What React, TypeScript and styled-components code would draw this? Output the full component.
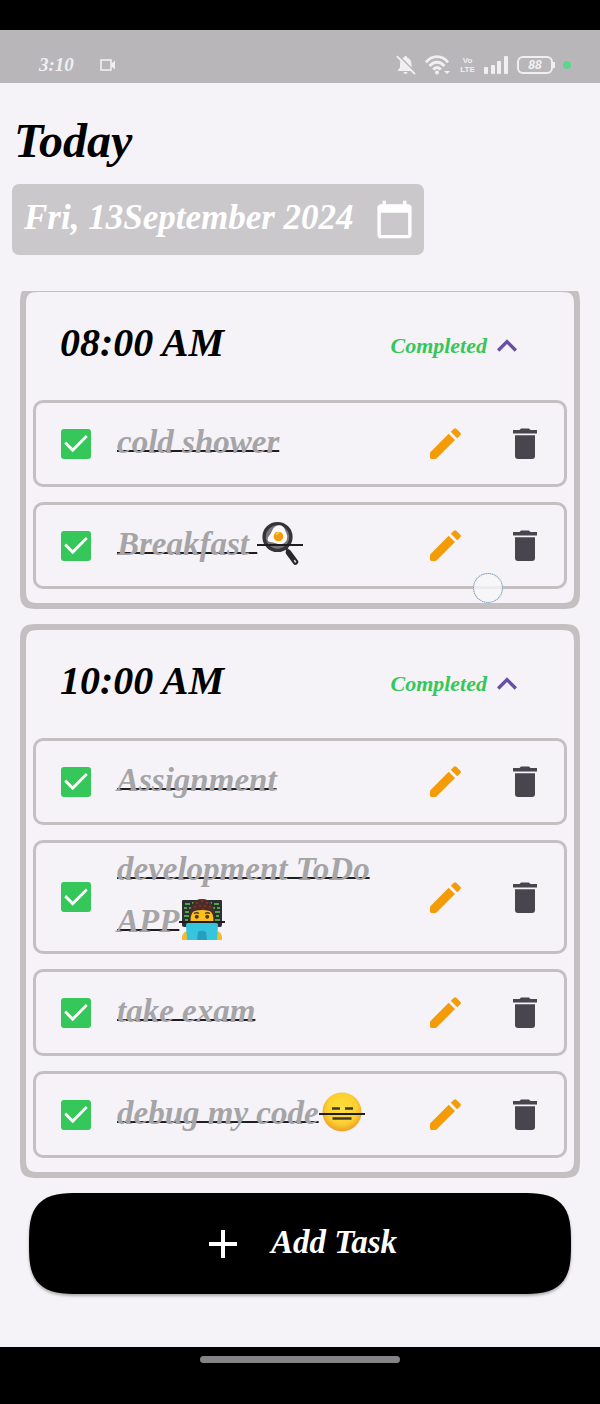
import React, { useState } from "react";
import styled, { createGlobalStyle } from "styled-components";
import { MdCalendarToday, MdExpandLess, MdExpandMore } from "react-icons/md";

const GlobalStyle = createGlobalStyle`
  *, *::before, *::after { box-sizing: border-box; }
  body {
    margin: 0;
    background: #000;
    font-family: "Liberation Serif", serif;
    font-style: italic;
    font-weight: 700;
  }
  button, input { font: inherit; }
`;

const Screen = styled.div`
  display: flex;
  flex-direction: column;
  min-height: 100vh;
  padding-top: 30px;
  background: #000;
`;

const StatusBar = styled.header`
  display: flex;
  align-items: center;
  justify-content: space-between;
  height: 53px;
  padding: 16px 29px 0 39px;
  background: #b8b6b9;
  color: #f1eff2;
`;

const StatusGroup = styled.div<{ $gap: number }>`
  display: flex;
  align-items: center;
  gap: ${(p) => p.$gap}px;
`;

const Clock = styled.span`
  font-size: 19px;
  line-height: 24px;
`;

const Volte = styled.span`
  display: flex;
  flex-direction: column;
  align-items: center;
  width: 15px;
  font: 700 8px/9px "Liberation Sans", sans-serif;
`;

const Battery = styled.span`
  position: relative;
  display: grid;
  place-items: center;
  width: 36px;
  height: 18px;
  border: 2px solid currentColor;
  border-radius: 6px;
  font: italic 700 12px/12px "Liberation Sans", sans-serif;

  &::after {
    content: "";
    position: absolute;
    right: -4px;
    top: 4px;
    width: 2px;
    height: 6px;
    background: currentColor;
  }
`;

const ActiveDot = styled.span`
  width: 8px;
  height: 8px;
  margin-left: 1px;
  border-radius: 50%;
  background: #5cd68a;
`;

const Main = styled.main`
  flex: 1;
  display: flex;
  flex-direction: column;
  padding: 28px 0 53px;
  background: #f5f3f7;
`;

const PageTitle = styled.h1`
  margin: 0 14px 13px;
  font-size: 48px;
  line-height: 60px;
  color: #000;
`;

const DateButton = styled.button`
  display: flex;
  align-items: center;
  align-self: flex-start;
  gap: 20px;
  height: 71px;
  margin: 0 12px 36px;
  padding: 0 9px 0 12px;
  border: 0;
  border-radius: 7px;
  background: #cac8cb;
  color: #fff;
  font-size: 35px;
  line-height: 40px;

  span { padding-bottom: 4px; }
`;

const TaskList = styled.section`
  position: relative;
  display: flex;
  flex-direction: column;
  gap: 15px;
  padding: 0 20px;
  overflow: hidden;
`;

const Card = styled.article<{ $scrolled?: boolean }>`
  margin-top: ${(p) => (p.$scrolled ? -5 : 0)}px;
  padding: 0 7px 14px;
  border: 6px solid #c4bfc1;
  border-radius: 16px;

  @supports (corner-shape: squircle) {
    border-radius: 22px;
    corner-shape: squircle;
  }
`;

const CardHeader = styled.div`
  display: flex;
  align-items: center;
  justify-content: space-between;
  height: 108px;
  padding: 0 40px 0 27px;
`;

const Time = styled.h2`
  margin: 0;
  padding-bottom: 6px;
  font-size: 40px;
  line-height: 48px;
  color: #000;
`;

const Toggle = styled.button`
  display: flex;
  align-items: center;
  padding: 0;
  border: 0;
  background: none;
  color: #35c759;
  font-size: 22px;
  line-height: 28px;

  svg { color: #6750a4; }
`;

const Rows = styled.ul`
  display: flex;
  flex-direction: column;
  gap: 15px;
  margin: 0;
  padding: 0;
  list-style: none;
`;

const Row = styled.li`
  display: flex;
  align-items: center;
  min-height: 87px;
  padding: 0 27px 0 25px;
  border: 3px solid #c4bfc1;
  border-radius: 10px;
`;

const TaskLabel = styled.label`
  flex: 1;
  display: flex;
  align-items: center;
  gap: 26px;
  min-width: 0;
`;

const Check = styled.input`
  appearance: none;
  flex: none;
  width: 30px;
  height: 30px;
  margin: 0;
  border: 3px solid #35c759;
  border-radius: 3px;

  &:checked {
    border: 0;
    background: #35c759;
  }

  &:checked::before {
    content: "";
    display: block;
    width: 30px;
    height: 30px;
    background: #fff;
    clip-path: polygon(39% 79%, 11% 51%, 17% 43%, 39% 65%, 83% 22%, 89% 28%);
  }
`;

const TaskText = styled.span<{ $done: boolean }>`
  padding-bottom: 4px;
  font-size: 33px;
  line-height: 52px;
  color: ${(p) => (p.$done ? "#a5a4a6" : "#000")};

  s {
    text-decoration: ${(p) => (p.$done ? "underline 2px #1f1c22" : "none")};
    text-decoration-skip-ink: none;
    text-underline-offset: -3px;
  }
`;

const EmojiBox = styled.span<{ $done: boolean }>`
  position: relative;
  display: inline-block;
  width: 46px;
  height: 46px;
  vertical-align: -12px;

  svg { display: block; }

  &::after {
    content: "";
    display: ${(p) => (p.$done ? "block" : "none")};
    position: absolute;
    left: 0;
    right: 0;
    top: 23px;
    height: 2px;
    background: #1f1c22;
  }
`;

const Actions = styled.div`
  display: flex;
  gap: 52px;
`;

const IconButton = styled.button<{ $color: string }>`
  display: grid;
  place-items: center;
  padding: 0;
  border: 0;
  background: none;
  color: ${(p) => p.$color};
`;

const TouchPoint = styled.span`
  position: absolute;
  left: 473px;
  top: 282px;
  width: 30px;
  height: 30px;
  border: 1px dotted #4b9fcb;
  outline: 1px solid rgba(150, 150, 155, 0.4);
  outline-offset: -1px;
  border-radius: 50%;
  background: rgba(248, 246, 249, 0.8);
  pointer-events: none;
`;

const AddButton = styled.button`
  display: flex;
  align-items: center;
  justify-content: center;
  gap: 34px;
  height: 101px;
  margin: 15px 29px 0;
  padding: 0 0 0 6px;
  border: 0;
  border-radius: 40px;
  background: #000;
  color: #fff;
  font-size: 33px;
  line-height: 40px;
  box-shadow: 0 2px 3px rgba(0, 0, 0, 0.3);

  span { padding-bottom: 4px; }

  @supports (corner-shape: squircle) {
    border-radius: 50px;
    corner-shape: superellipse(1.6);
  }
`;

const NavBar = styled.footer`
  display: flex;
  justify-content: center;
  height: 57px;
  padding-top: 9px;
  background: #000;
`;

const NavHandle = styled.span`
  width: 200px;
  height: 7px;
  border-radius: 4px;
  background: #868387;
`;

const CameraIcon = () => (
  <svg width="16" height="12" viewBox="0 0 16 12" aria-hidden="true">
    <rect x="1" y="1" width="10" height="10" fill="none" stroke="currentColor" strokeWidth="1.6" />
    <path d="M11 5l4-3.5v9L11 7z" fill="currentColor" />
  </svg>
);

const BellOffIcon = () => (
  <svg width="20" height="20" viewBox="0 0 20 20" aria-hidden="true">
    <path
      d="M9.500 1c1 0 1.600.7 1.600 1.600C14 3.400 15.500 6 15.500 9v3.500l2 2.500v1H2v-1l2-2.500V9c0-3 1.300-5.600 4-6.400C8 1.700 8.600 1 9.500 1zM7.500 17h4c0 1.300-.9 2-2 2s-2-.7-2-2z"
      fill="currentColor"
    />
    <path d="M2 0l18 18" stroke="#b8b6b9" strokeWidth="1.600" />
    <path d="M.8 1.200l18.200 18" stroke="currentColor" strokeWidth="1.800" />
  </svg>
);

const WifiIcon = () => (
  <svg width="26" height="20" viewBox="0 0 26 20" aria-hidden="true">
    <g fill="none" stroke="currentColor" strokeWidth="2.8">
      <path d="M1 7.3C7-.2 17-.2 23 7.3" />
      <path d="M4.6 11C8.8 6 15.2 6 19.4 11" />
      <path d="M8.2 14.5C10.500 11.800 13.500 11.800 15.800 14.500" />
    </g>
    <circle cx="12" cy="17.5" r="2" fill="currentColor" />
    <path d="M19 16h6l-3 3z" fill="currentColor" />
  </svg>
);

const SignalIcon = () => (
  <svg width="24" height="18" viewBox="0 0 24 18" fill="currentColor" aria-hidden="true">
    <rect x="0" y="11" width="4" height="7" rx="1" />
    <rect x="7" y="9" width="4" height="9" rx="1" />
    <rect x="13" y="5" width="4" height="13" rx="1" />
    <rect x="20" y="0" width="4" height="18" rx="1" />
  </svg>
);

const PencilIcon = () => (
  <svg width="31" height="31" viewBox="0 0 31 31" fill="currentColor" aria-hidden="true">
    <path d="M0 25.500Q0 24.500.8 23.700L18.700 5.800l6.300 6.300L7 30q-.8.900-2 .9H1.500Q0 31 0 29.500z" />
    <path d="M20.800 3.800L23.900.8q1.200-1.100 2.400 0l4 4q1.200 1.200 0 2.400l-3.100 3z" />
  </svg>
);

const TrashIcon = () => (
  <svg width="24" height="31" viewBox="0 0 24 31" fill="currentColor" aria-hidden="true">
    <path d="M0 2h6.500L8 .5h8L17.500 2H24v3.500H0z" />
    <path d="M2 7.200h20V28q0 3-3 3H5q-3 0-3-3z" />
  </svg>
);

const PlusIcon = () => (
  <svg width="28" height="28" viewBox="0 0 28 28" aria-hidden="true">
    <path d="M14 0v28M0 14h28" stroke="currentColor" strokeWidth="4" />
  </svg>
);

const PanEmoji = () => (
  <svg width="46" height="46" viewBox="0 0 46 46" role="img" aria-label="egg in a pan">
    <path d="M29 27l3 4.500" stroke="#343438" strokeWidth="3" />
    <path d="M31.500 31.500l7 9.500" stroke="#28282b" strokeWidth="5.500" strokeLinecap="round" />
    <path d="M37.500 39.500l1 1.500" stroke="#d8d8da" strokeWidth="1.500" strokeLinecap="round" />
    <circle cx="20.500" cy="16" r="13.400" fill="#77767c" stroke="#343438" strokeWidth="3.400" />
    <path
      d="M19 5c4-2 8 0 9 4 1 3 3 5 2 9-1 4-5 6-9 5-3-1-5-2-8-2-3-1-3-4-1-6 3-3 3-8 7-10z"
      fill="#fcfbfa"
    />
    <circle cx="21.500" cy="15.500" r="4.800" fill="#f29d0c" />
    <path d="M19 14c.5-1.500 2-2.500 3.500-2" stroke="#ffd65a" strokeWidth="1.300" fill="none" />
  </svg>
);

const CoderEmoji = () => (
  <svg width="46" height="46" viewBox="0 0 46 46" role="img" aria-label="technologist">
    <path d="M4 2h38q1 0 1 1v24q0 2-2 2H5q-2 0-2-2V3q0-1 1-1z" fill="#2c2f31" />
    <path
      d="M6 6h5M13 5h3M30 5h3M35 6h5M5 10h3M10 10h3M33 10h3M38 10h3M6 14h4M36 14h5M5 18h5M37 18h3M6 22h3M36 22h5"
      stroke="#58cf4e"
      strokeWidth="1.7"
    />
    <path d="M11 21C10 8 14 1 23 1s13 7 12 20z" fill="#4b2c29" />
    <path
      d="M17 5h2M22 3h2M27 5h2M15 9h2M20 8h2M25 8h2M30 9h2M23 11h2"
      stroke="#8e332b"
      strokeWidth="1.6"
    />
    <path d="M11.500 24c0-5 .5-9 4-11q7.500-2 15 0c3.500 2 4 6 4 11z" fill="#fcc21b" />
    <path d="M15 15.500q2.500-1.500 5 0M26 15.500q2.500-1.500 5 0" stroke="#513731" strokeWidth="1.400" fill="none" />
    <circle cx="17.800" cy="18.800" r="2" fill="#513731" />
    <circle cx="28.200" cy="18.800" r="2" fill="#513731" />
    <path d="M3 42v-4q2-5 6-5v9zM43 42v-4q-2-5-6-5v9z" fill="#f9b92c" />
    <path d="M9 25h28q2 0 2 2l-1 15H8L7 27q0-2 2-2z" fill="#36c5dd" />
    <path d="M19 34q4-3 8 0l1 8H18z" fill="#249fbd" />
  </svg>
);

const FlatFaceEmoji = () => (
  <svg width="46" height="46" viewBox="0 0 46 46" role="img" aria-label="expressionless face">
    <defs>
      <radialGradient id="face" cx="50%" cy="42%" r="55%">
        <stop offset="0" stopColor="#fde13f" />
        <stop offset="0.7" stopColor="#fcd02f" />
        <stop offset="1" stopColor="#efa52c" />
      </radialGradient>
    </defs>
    <circle cx="23" cy="22" r="19.5" fill="url(#face)" />
    <path d="M13 18.500h8M26 18.500h8M13.500 28.500h19" stroke="#403733" strokeWidth="2.6" />
  </svg>
);

type Task = { text: string; emoji?: React.ReactNode };
type Group = { time: string; tasks: Task[] };

const groups: Group[] = [
  {
    time: "08:00 AM",
    tasks: [{ text: "cold shower" }, { text: "Breakfast ", emoji: <PanEmoji /> }],
  },
  {
    time: "10:00 AM",
    tasks: [
      { text: "Assignment" },
      { text: "development ToDo APP", emoji: <CoderEmoji /> },
      { text: "take exam" },
      { text: "debug my code", emoji: <FlatFaceEmoji /> },
    ],
  },
];

function TaskRow({ task }: { task: Task }) {
  const [done, setDone] = useState(true);
  return (
    <Row>
      <TaskLabel>
        <Check type="checkbox" checked={done} onChange={() => setDone(!done)} />
        <TaskText $done={done}>
          <s>{task.text}</s>
          {task.emoji && <EmojiBox $done={done}>{task.emoji}</EmojiBox>}
        </TaskText>
      </TaskLabel>
      <Actions>
        <IconButton type="button" $color="#f39c08" aria-label="Edit task">
          <PencilIcon />
        </IconButton>
        <IconButton type="button" $color="#49454f" aria-label="Delete task">
          <TrashIcon />
        </IconButton>
      </Actions>
    </Row>
  );
}

function TaskGroup({ group, scrolled }: { group: Group; scrolled: boolean }) {
  const [open, setOpen] = useState(true);
  return (
    <Card $scrolled={scrolled}>
      <CardHeader>
        <Time>{group.time}</Time>
        <Toggle type="button" aria-expanded={open} onClick={() => setOpen(!open)}>
          Completed
          {open ? <MdExpandLess size={40} /> : <MdExpandMore size={40} />}
        </Toggle>
      </CardHeader>
      {open && (
        <Rows>
          {group.tasks.map((task) => (
            <TaskRow key={task.text} task={task} />
          ))}
        </Rows>
      )}
    </Card>
  );
}

export default function App() {
  return (
    <Screen>
      <GlobalStyle />
      <StatusBar>
        <StatusGroup $gap={26}>
          <Clock>3:10</Clock>
          <CameraIcon />
        </StatusGroup>
        <StatusGroup $gap={9}>
          <BellOffIcon />
          <WifiIcon />
          <Volte>
            <span>Vo</span>
            <span>LTE</span>
          </Volte>
          <SignalIcon />
          <Battery>88</Battery>
          <ActiveDot />
        </StatusGroup>
      </StatusBar>
      <Main>
        <PageTitle>Today</PageTitle>
        <DateButton type="button">
          <span>Fri, 13September 2024</span>
          <MdCalendarToday size={41} />
        </DateButton>
        <TaskList>
          {groups.map((group, index) => (
            <TaskGroup key={group.time} group={group} scrolled={index === 0} />
          ))}
          <TouchPoint />
        </TaskList>
        <AddButton type="button">
          <PlusIcon />
          <span>Add Task</span>
        </AddButton>
      </Main>
      <NavBar>
        <NavHandle />
      </NavBar>
    </Screen>
  );
}
